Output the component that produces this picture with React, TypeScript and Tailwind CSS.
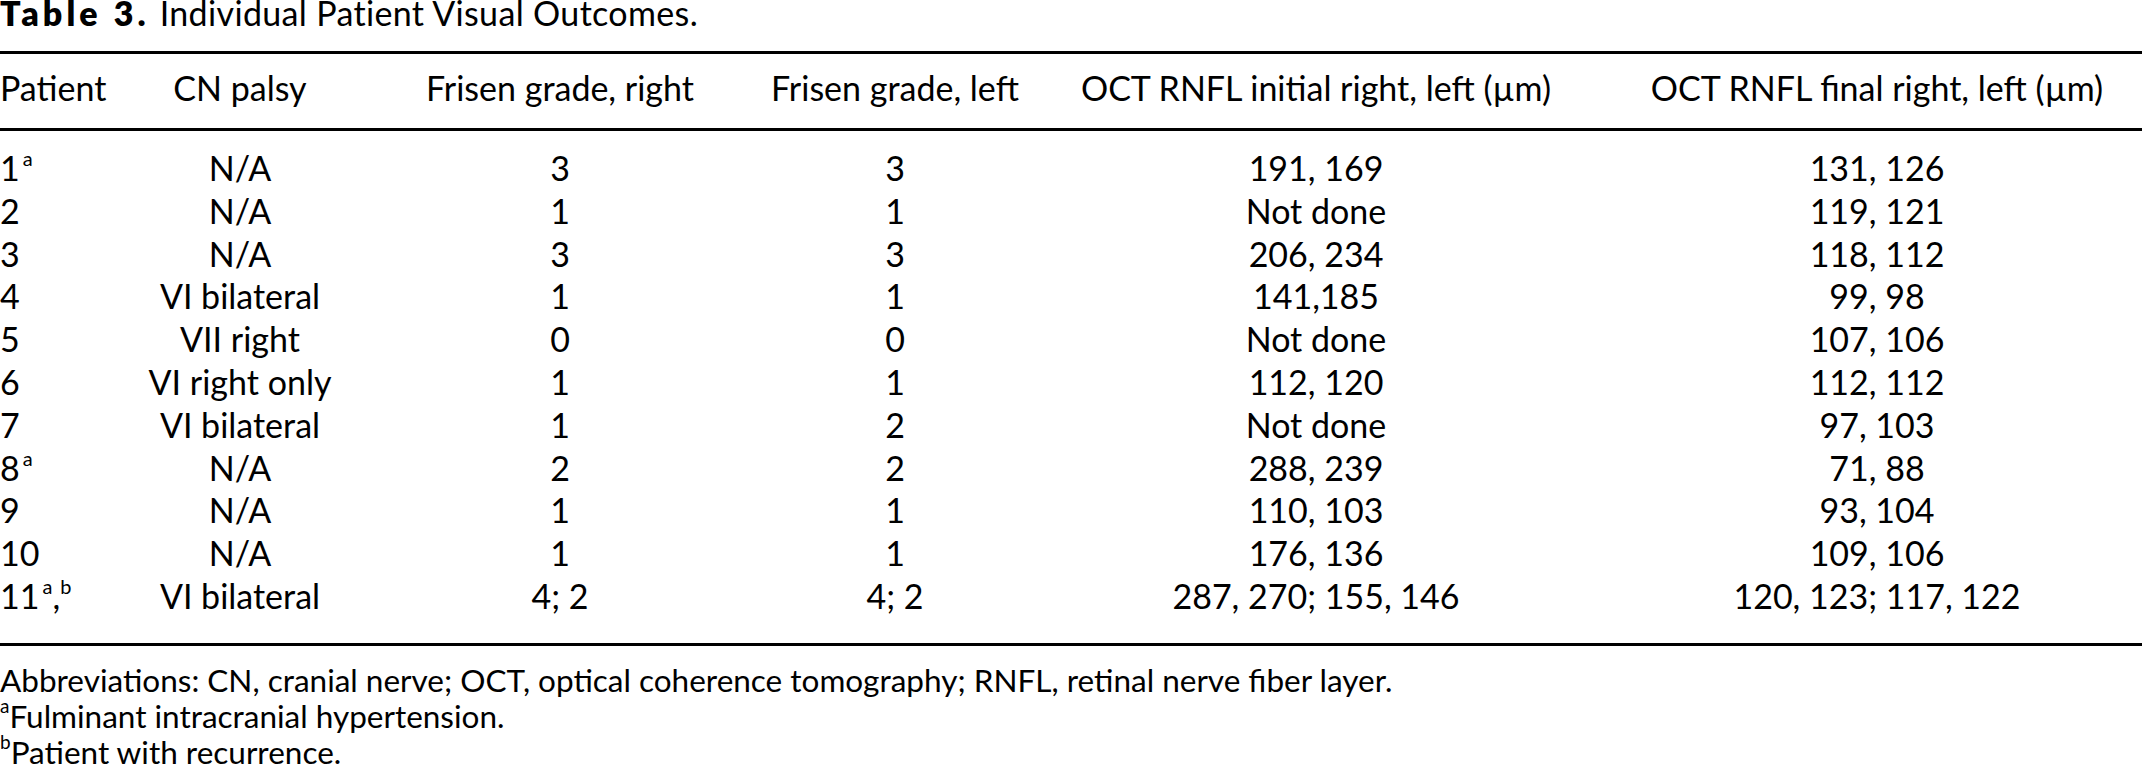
import React from 'react'

type Row = {
  id: string
  sup?: 'a' | 'ab'
  palsy: string
  right: string
  left: string
  initial: string
  final: string
}

const ROWS: Row[] = [
  { id: '1', sup: 'a', palsy: 'N/A', right: '3', left: '3', initial: '191, 169', final: '131, 126' },
  { id: '2', palsy: 'N/A', right: '1', left: '1', initial: 'Not done', final: '119, 121' },
  { id: '3', palsy: 'N/A', right: '3', left: '3', initial: '206, 234', final: '118, 112' },
  { id: '4', palsy: 'VI bilateral', right: '1', left: '1', initial: '141,185', final: '99, 98' },
  { id: '5', palsy: 'VII right', right: '0', left: '0', initial: 'Not done', final: '107, 106' },
  { id: '6', palsy: 'VI right only', right: '1', left: '1', initial: '112, 120', final: '112, 112' },
  { id: '7', palsy: 'VI bilateral', right: '1', left: '2', initial: 'Not done', final: '97, 103' },
  { id: '8', sup: 'a', palsy: 'N/A', right: '2', left: '2', initial: '288, 239', final: '71, 88' },
  { id: '9', palsy: 'N/A', right: '1', left: '1', initial: '110, 103', final: '93, 104' },
  { id: '10', palsy: 'N/A', right: '1', left: '1', initial: '176, 136', final: '109, 106' },
  { id: '11', sup: 'ab', palsy: 'VI bilateral', right: '4; 2', left: '4; 2', initial: '287, 270; 155, 146', final: '120, 123; 117, 122' },
]

const GRID = 'grid grid-cols-[130px_220px_420px_250px_592px_530px]'
const CELL = 'flex justify-center whitespace-nowrap'

const Sup = ({ children, className = '' }: { children: React.ReactNode; className?: string }) => (
  <sup className={`text-[20px] top-[-0.75em] ${className}`}>{children}</sup>
)

export default function App() {
  return (
    <div
      className="w-[2142px] h-[770px] overflow-hidden bg-white text-black"
      style={{ fontFamily: 'Lato, "Open Sans", sans-serif' }}
    >
      {/* caption */}
      <h1 className="text-[34px] leading-[26px] whitespace-nowrap">
        <span className="font-extrabold tracking-[0.12em]">Table 3.</span>
        <span className="ml-[10px] tracking-[0.01em]">Individual Patient Visual Outcomes.</span>
      </h1>

      <div className="mt-[25px] border-t-[3px] border-b-[3px] border-black">
        {/* header */}
        <div className={`${GRID} text-[34px] leading-[40px] pt-[14px] pb-[20px] border-b-[3px] border-black`}>
          <div className="whitespace-nowrap">Patient</div>
          <div className={CELL}>CN palsy</div>
          <div className={CELL}>Frisen grade, right</div>
          <div className={CELL}>Frisen grade, left</div>
          <div className={CELL}>OCT RNFL initial right, left (µm)</div>
          <div className={CELL}>OCT RNFL final right, left (µm)</div>
        </div>

        {/* body */}
        <div className="pt-[16px] pb-[25px] text-[34px] leading-[42.8px]">
          {ROWS.map((row) => (
            <div key={row.id} className={GRID}>
              <div className="whitespace-nowrap">
                {row.id}
                {row.sup === 'a' && <Sup className="ml-[3px]">a</Sup>}
                {row.sup === 'ab' && (
                  <>
                    <Sup className="ml-[3px]">a</Sup>,<Sup>b</Sup>
                  </>
                )}
              </div>
              <div className={CELL}>{row.palsy}</div>
              <div className={CELL}>{row.right}</div>
              <div className={CELL}>{row.left}</div>
              <div className={CELL}>{row.initial}</div>
              <div className={CELL}>{row.final}</div>
            </div>
          ))}
        </div>
      </div>

      {/* footnotes */}
      <div className="mt-[16px] text-[31.5px] leading-[36px] whitespace-nowrap">
        <p>Abbreviations: CN, cranial nerve; OCT, optical coherence tomography; RNFL, retinal nerve fiber layer.</p>
        <p>
          <sup className="text-[19px] top-[-0.8em]">a</sup>Fulminant intracranial hypertension.
        </p>
        <p>
          <sup className="text-[19px] top-[-0.8em]">b</sup>Patient with recurrence.
        </p>
      </div>
    </div>
  )
}
